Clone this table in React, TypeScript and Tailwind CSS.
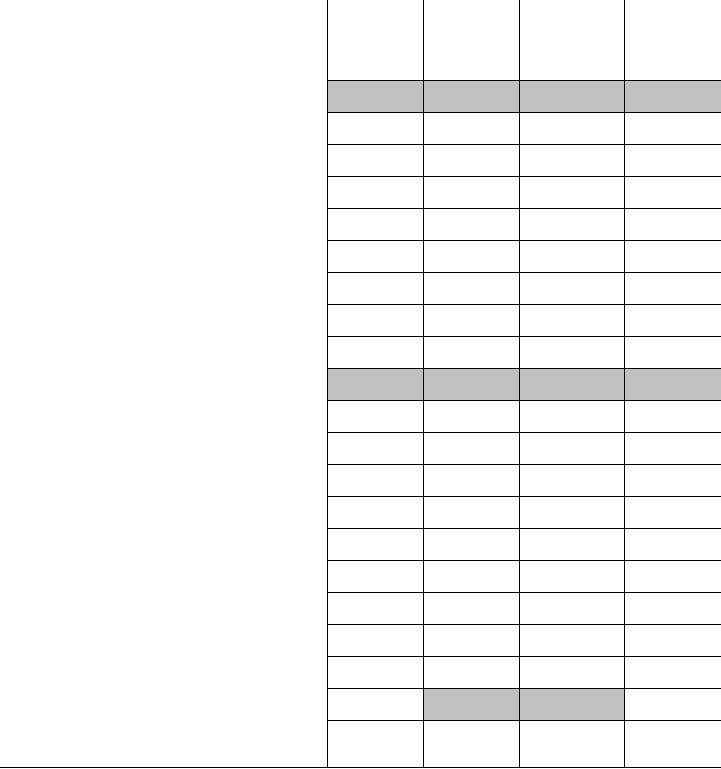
const colWidths = ["w-[96px]", "w-[96px]", "w-[105px]", "w-[97px]"];

// row shading: "all" = every cell gray, number[] = only those columns
const rows: (string | number[] | null)[] = [
  "all",
  null, null, null, null, null, null, null, null,
  "all",
  null, null, null, null, null, null, null, null, null,
  [1, 2],
];

function isGray(shade: string | number[] | null, col: number) {
  if (shade === "all") return true;
  if (Array.isArray(shade)) return shade.includes(col);
  return false;
}

export default function App() {
  return (
    <div className="w-[721px] h-[769px] bg-white overflow-hidden">
      <div className="flex h-[768px] border-b border-black">
        <div className="w-[327px] shrink-0" />
        <div className="flex flex-col flex-1">
          <div className="flex h-[80px]">
            {colWidths.map((w, i) => (
              <div key={i} className={`${w} shrink-0 border-l border-black`} />
            ))}
          </div>
          {rows.map((shade, r) => (
            <div key={r} className="flex h-[32px]">
              {colWidths.map((w, i) => (
                <div
                  key={i}
                  className={`${w} shrink-0 border-l border-t border-black ${
                    isGray(shade, i) ? "bg-[#c0c0c0]" : "bg-white"
                  }`}
                />
              ))}
            </div>
          ))}
          <div className="flex flex-1">
            {colWidths.map((w, i) => (
              <div key={i} className={`${w} shrink-0 border-l border-t border-black`} />
            ))}
          </div>
        </div>
      </div>
    </div>
  );
}
